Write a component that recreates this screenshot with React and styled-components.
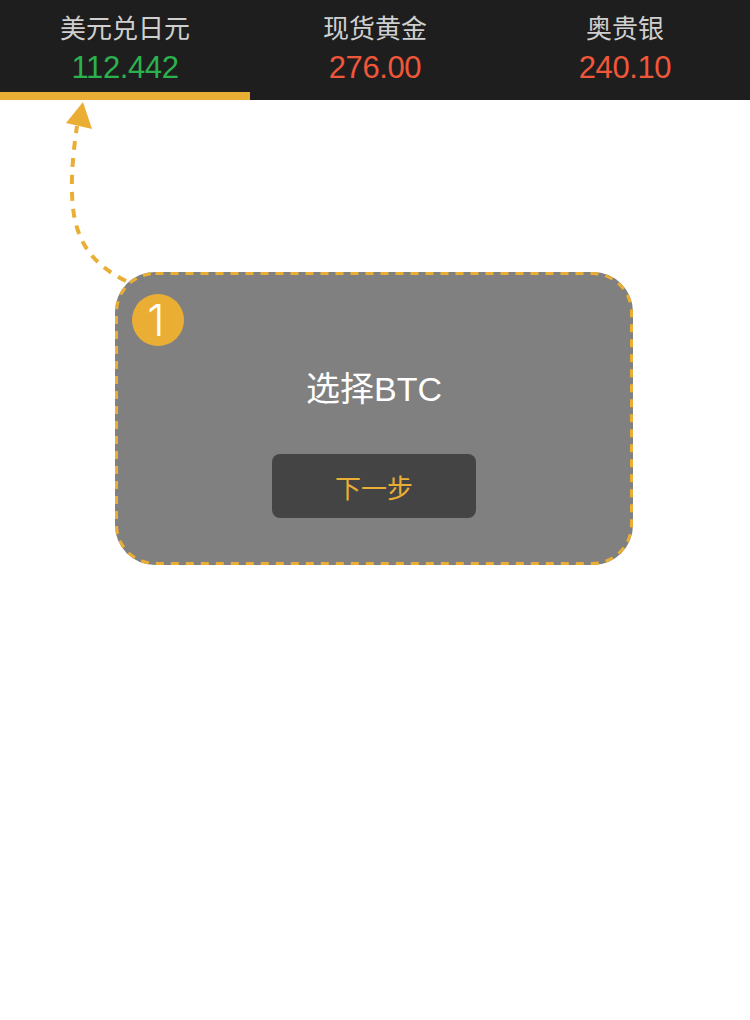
import React from "react";
import styled, { createGlobalStyle } from "styled-components";

const Global = createGlobalStyle`
  html, body { margin: 0; padding: 0; background: #ffffff; }
  body { font-family: "Liberation Sans", "Noto Sans CJK SC", sans-serif; }
`;

const Page = styled.div`
  position: relative;
  width: 750px;
  min-height: 1020px;
  background: #ffffff;
`;

const Header = styled.div`
  display: grid;
  grid-template-columns: repeat(3, 1fr);
  height: 100px;
  background: #1e1e1e;
`;

const Tab = styled.div`
  position: relative;
  display: flex;
  flex-direction: column;
  align-items: center;
  padding-top: 9px;
  box-sizing: border-box;
  border-bottom: 8px solid ${(p) => (p.$active ? "#ebae35" : "transparent")};
`;

const TabLabel = styled.div`
  font-family: "Noto Sans CJK SC", sans-serif;
  font-size: 26px;
  line-height: 36px;
  color: #cfcfcf;
`;

const TabValue = styled.div`
  margin-top: 3px;
  font-family: "Liberation Sans", sans-serif;
  font-size: 31px;
  line-height: 40px;
  letter-spacing: -0.4px;
  color: ${(p) => (p.$up ? "#2bb24c" : "#f0573a")};
`;

const Card = styled.div`
  position: relative;
  width: 518px;
  height: 293px;
  box-sizing: border-box;
  margin: 172px auto 0;
  transform: translateX(-1px);
  background: #808080;
  border-radius: 40px;
  display: flex;
  flex-direction: column;
  align-items: center;
  padding-top: 95px;
`;

const CardOutline = styled.svg`
  position: absolute;
  left: 0;
  top: 0;
  width: 518px;
  height: 293px;
  pointer-events: none;
`;

const Badge = styled.div`
  position: absolute;
  left: 17px;
  top: 22px;
  width: 52px;
  height: 52px;
  border-radius: 50%;
  background: #ebae35;
  color: #ffffff;
  display: flex;
  align-items: center;
  justify-content: center;
  padding-right: 4px;
  box-sizing: border-box;
  font-family: "Inter", "Open Sans", sans-serif;
  font-size: 44px;
  font-weight: 300;
  line-height: 1;
`;

const Title = styled.div`
  font-family: "Liberation Sans", "Noto Sans CJK SC", sans-serif;
  font-size: 34px;
  line-height: 44px;
  color: #ffffff;
`;

const NextButton = styled.button`
  margin-top: 43px;
  width: 204px;
  height: 64px;
  border: none;
  border-radius: 8px;
  background: #444444;
  color: #ebae35;
  font-family: "Noto Sans CJK SC", sans-serif;
  font-size: 26px;
  cursor: pointer;
`;

const ArrowLayer = styled.svg`
  position: absolute;
  left: 0;
  top: 0;
  pointer-events: none;
`;

const tabs = [
  { label: "美元兑日元", value: "112.442", up: true, active: true },
  { label: "现货黄金", value: "276.00", up: false },
  { label: "奥贵银", value: "240.10", up: false },
];

export default function App() {
  return (
    <Page>
      <Global />
      <Header>
        {tabs.map((t) => (
          <Tab key={t.label} $active={t.active}>
            <TabLabel>{t.label}</TabLabel>
            <TabValue $up={t.up}>{t.value}</TabValue>
          </Tab>
        ))}
      </Header>
      <Card>
        <CardOutline viewBox="0 0 518 293">
          <rect
            x="1.5"
            y="1.5"
            width="515"
            height="290"
            rx="39"
            fill="none"
            stroke="#ebae35"
            strokeWidth="3"
            strokeDasharray="8 7"
          />
        </CardOutline>
        <Badge>1</Badge>
        <Title>选择BTC</Title>
        <NextButton>下一步</NextButton>
      </Card>
      <ArrowLayer width="750" height="320" viewBox="0 0 750 320">
        <path
          d="M126 281 C 100 268 80 250 74 215 C 70 190 72 160 77 126"
          fill="none"
          stroke="#ebae35"
          strokeWidth="4"
          strokeDasharray="9 8"
        />
        <polygon points="83,102 66,123 92,129" fill="#ebae35" />
      </ArrowLayer>
    </Page>
  );
}
